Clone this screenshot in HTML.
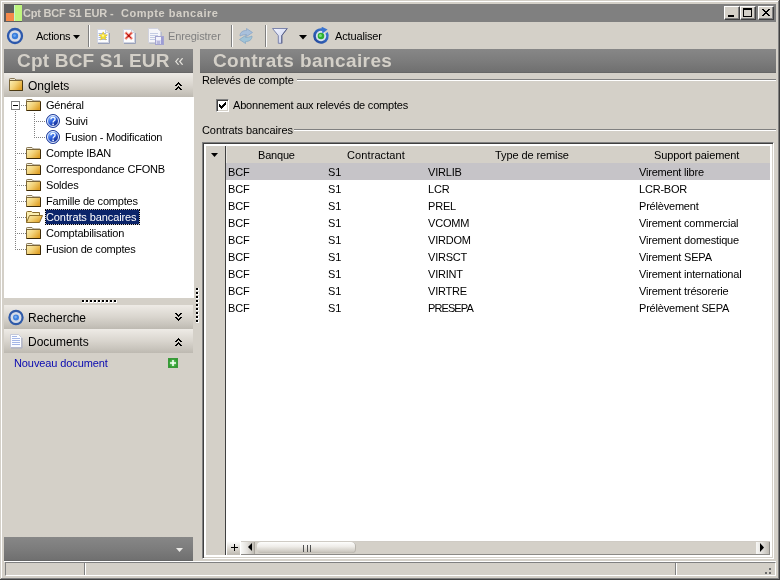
<!DOCTYPE html>
<html><head><meta charset="utf-8">
<style>
*{margin:0;padding:0;box-sizing:border-box}
html,body{width:780px;height:580px;overflow:hidden;background:#d4d0c8;position:relative;font-family:"Liberation Sans",sans-serif;font-size:11px;color:#000}
.a{position:absolute}
.t{position:absolute;white-space:nowrap;font-size:11px;line-height:13px;will-change:transform}
.b12{font-size:12px;line-height:14px}
.hdr{position:absolute;background:linear-gradient(#878787,#7c7c7c 50%,#707070 94%,#626262)}
.sec{position:absolute;background:linear-gradient(#eeebe6,#d9d5ce 50%,#c8c4bc 82%,#bdb9b1)}
.dot{position:absolute;border-top:1px dotted #808080}
.vdot{position:absolute;border-left:1px dotted #808080}
.tb{position:absolute;width:16px;height:14px;background:#d4d0c8;border-top:1px solid #fff;border-left:1px solid #fff;border-right:1px solid #404040;border-bottom:1px solid #404040;box-shadow:inset -1px -1px 0 #808080}
</style></head><body>
<!-- window frame -->
<div class="a" style="left:1px;top:1px;width:777px;height:1px;background:#fff"></div>
<div class="a" style="left:1px;top:1px;width:1px;height:577px;background:#fff"></div>
<div class="a" style="left:778px;top:1px;width:1px;height:578px;background:#808080"></div>
<div class="a" style="left:779px;top:0;width:1px;height:580px;background:#404040"></div>
<div class="a" style="left:1px;top:578px;width:778px;height:1px;background:#808080"></div>
<div class="a" style="left:0;top:579px;width:780px;height:1px;background:#404040"></div>

<!-- title bar -->
<div class="a" style="left:4px;top:4px;width:772px;height:18px;background:#808080"></div>
<div class="a" style="left:4px;top:4px;width:18px;height:18px;background:#5e5e5e"></div>
<div class="a" style="left:6px;top:13px;width:8px;height:8px;background:#f5894a"></div>
<div class="a" style="left:14px;top:5px;width:8px;height:16px;background:#bff57e;border-left:1px solid #c8f8d0"></div>
<div class="t" style="left:23px;top:7px;font-weight:bold;color:#d4d0c8;letter-spacing:-0.2px">Cpt BCF S1 EUR</div><div class="t" style="left:110px;top:7px;font-weight:bold;color:#d4d0c8">-</div><div class="t" style="left:121px;top:7px;font-weight:bold;color:#d4d0c8;letter-spacing:0.55px">Compte bancaire</div>
<div class="tb" style="left:724px;top:6px"><div class="a" style="left:3px;top:8px;width:6px;height:2px;background:#000"></div></div>
<div class="tb" style="left:740px;top:6px"><div class="a" style="left:2px;top:1px;width:9px;height:9px;border:1px solid #000;border-top-width:2px"></div></div>
<div class="tb" style="left:758px;top:6px"><svg class="a" style="left:3px;top:2px" width="8" height="7" viewBox="0 0 8 7" shape-rendering="crispEdges" fill="#000"><rect x="0" y="0" width="1" height="1"/><rect x="1" y="0" width="1" height="1"/><rect x="6" y="0" width="1" height="1"/><rect x="7" y="0" width="1" height="1"/><rect x="1" y="1" width="1" height="1"/><rect x="2" y="1" width="1" height="1"/><rect x="5" y="1" width="1" height="1"/><rect x="6" y="1" width="1" height="1"/><rect x="2" y="2" width="1" height="1"/><rect x="3" y="2" width="1" height="1"/><rect x="4" y="2" width="1" height="1"/><rect x="5" y="2" width="1" height="1"/><rect x="3" y="3" width="1" height="1"/><rect x="4" y="3" width="1" height="1"/><rect x="2" y="4" width="1" height="1"/><rect x="3" y="4" width="1" height="1"/><rect x="4" y="4" width="1" height="1"/><rect x="5" y="4" width="1" height="1"/><rect x="1" y="5" width="1" height="1"/><rect x="2" y="5" width="1" height="1"/><rect x="5" y="5" width="1" height="1"/><rect x="6" y="5" width="1" height="1"/><rect x="0" y="6" width="1" height="1"/><rect x="1" y="6" width="1" height="1"/><rect x="6" y="6" width="1" height="1"/><rect x="7" y="6" width="1" height="1"/></svg></div>

<!-- TOOLBAR -->
<svg class="a" style="left:6px;top:27px" width="18" height="18" viewBox="0 0 18 18"><circle cx="9" cy="9" r="7" fill="#d8dce6" stroke="#2c58ac" stroke-width="2.3"/><circle cx="9" cy="9" r="3.2" fill="#3a7ddb"/><circle cx="8.6" cy="8.6" r="1.4" fill="#6aa6f0"/></svg>
<div class="t" style="left:36px;top:30px;letter-spacing:-0.25px">Actions</div>
<svg class="a" style="left:73px;top:35px" width="7" height="4" viewBox="0 0 7 4"><path d="M0 0H7L3.5 4Z" fill="#000"/></svg>
<div class="a" style="left:88px;top:25px;width:1px;height:22px;background:#808080"></div>
<div class="a" style="left:89px;top:25px;width:1px;height:22px;background:#fff"></div>
<svg class="a" style="left:96px;top:28px" width="15" height="17" viewBox="0 0 15 17"><path d="M1.5 1.5H9.5L12.5 4.5V14.5H1.5Z" fill="#fcfdff" stroke="#d0d4e2"/><path d="M9.5 1.5V4.5H12.5" fill="#eef0f6" stroke="#c8ccd8"/><path d="M13.5 5V15.5H2" fill="none" stroke="#9aa2ba"/><path d="M2.5 5.5H10M2.5 7.5H11M2.5 9.5H11M2.5 11.5H11" stroke="#a8b8e0"/><path d="M7.20 3.90L8.38 6.68L11.38 6.94L9.10 8.92L9.79 11.86L7.20 10.30L4.61 11.86L5.30 8.92L3.02 6.94L6.02 6.68Z" fill="#f2e22a" stroke="#e0c030" stroke-width="0.7"/><circle cx="7" cy="7.6" r="1.2" fill="#fff6a0"/></svg>
<svg class="a" style="left:122px;top:28px" width="15" height="17" viewBox="0 0 15 17"><path d="M1.5 1.5H9.5L12.5 4.5V14.5H1.5Z" fill="#fcfdff" stroke="#d0d4e2"/><path d="M9.5 1.5V4.5H12.5" fill="#eef0f6" stroke="#c8ccd8"/><path d="M13.5 5V15.5H2" fill="none" stroke="#9aa2ba"/><path d="M3.2 4.2L10.2 11.2M10.2 4.2L3.2 11.2" stroke="#f8c8c0" stroke-width="3"/><path d="M3.5 4.5L9.9 10.9M9.9 4.5L3.5 10.9" stroke="#f07a6a" stroke-width="2"/><path d="M4.2 5.2L9.2 10.2M9.2 5.2L4.2 10.2" stroke="#b81010" stroke-width="0.9"/><circle cx="6.7" cy="7.7" r="1" fill="#a00"/></svg>
<svg class="a" style="left:147px;top:27px" width="18" height="19" viewBox="0 0 18 19"><path d="M1.5 1.5H10.5L13.5 4.5V15.5H1.5Z" fill="#f6f6fa" stroke="#d0d2de"/><path d="M3 6.5H11M3 8.5H11M3 10.5H11M3 12.5H9" stroke="#c4cce4"/><path d="M14.5 5V16.5H2.5" fill="none" stroke="#b8bccc"/><rect x="8.5" y="9.5" width="8" height="8" fill="#d8d8ee" stroke="#a4a4d0"/><rect x="9" y="10" width="5" height="3" fill="#f4f4fc"/><rect x="14" y="10" width="2" height="7" fill="#9c9cd4"/><rect x="10" y="14" width="3" height="3" fill="#b8b8dc"/></svg>
<div class="t" style="left:168px;top:30px;color:#808080;letter-spacing:-0.1px">Enregistrer</div>
<div class="a" style="left:231px;top:25px;width:1px;height:22px;background:#808080"></div>
<div class="a" style="left:232px;top:25px;width:1px;height:22px;background:#fff"></div>
<svg class="a" style="left:237px;top:27px" width="18" height="18" viewBox="0 0 18 18"><path d="M3 9C3 5 6 3.5 9.5 3.5V1.5L15.5 5.5L9.5 9.5V7.5C7 7.5 5.5 8 3 9Z" fill="#a8c0dc" stroke="#8aa6c8" stroke-width="0.8"/><path d="M15 9C15 13 12 14.5 8.5 14.5V16.5L2.5 12.5L8.5 8.5V10.5C11 10.5 12.5 10 15 9Z" fill="#a0c4d8" stroke="#86a8c4" stroke-width="0.8"/></svg>
<div class="a" style="left:265px;top:25px;width:1px;height:22px;background:#808080"></div>
<div class="a" style="left:266px;top:25px;width:1px;height:22px;background:#fff"></div>
<svg class="a" style="left:271px;top:26px" width="18" height="19" viewBox="0 0 18 19"><defs><linearGradient id="fng" x1="0" y1="0" x2="1" y2="1"><stop offset="0" stop-color="#f4f6ff"/><stop offset="1" stop-color="#c4cced"/></linearGradient></defs><path d="M1.5 2.5H16.2L10.8 9.6V17.3H7.3V9.6Z" fill="url(#fng)" stroke="#7c84ac" stroke-linejoin="round"/><path d="M16.2 2.5L10.8 9.6V17.3" fill="none" stroke="#5a6288"/></svg>
<svg class="a" style="left:299px;top:35px" width="8" height="5" viewBox="0 0 8 5"><path d="M0 0H8L4 4.5Z" fill="#000"/></svg>
<svg class="a" style="left:312px;top:27px" width="18" height="18" viewBox="0 0 18 18"><defs><linearGradient id="ag" x1="0" y1="1" x2="1" y2="0"><stop offset="0" stop-color="#24489c"/><stop offset="1" stop-color="#3c7cd8"/></linearGradient></defs><circle cx="9" cy="9" r="5" fill="#d6e4f4"/><path d="M14.63 5.75A6.5 6.5 0 1 1 10.2 2.6" fill="none" stroke="url(#ag)" stroke-width="2.6"/><path d="M9.6 -0.3L15.6 2.6L10.4 6.4Z" fill="#3a74d0"/><circle cx="9" cy="9" r="3.3" fill="#2db030"/><circle cx="8.4" cy="8.4" r="1.5" fill="#7ae07a"/></svg>
<div class="t" style="left:335px;top:30px;letter-spacing:-0.15px">Actualiser</div>


<!-- LEFT PANEL -->
<svg width="0" height="0" style="position:absolute"><defs>
<linearGradient id="fg" x1="0" y1="0" x2="1" y2="0.6"><stop offset="0" stop-color="#fbf0b8"/><stop offset="0.5" stop-color="#f3d37a"/><stop offset="1" stop-color="#e0a22a"/></linearGradient>
<linearGradient id="qg" x1="0.2" y1="0.1" x2="0.8" y2="0.9"><stop offset="0" stop-color="#80b0ff"/><stop offset="0.45" stop-color="#3064e0"/><stop offset="1" stop-color="#14288c"/></linearGradient>
</defs></svg>
<div class="hdr" style="left:4px;top:49px;width:189px;height:24px"></div>
<div class="t" style="left:17px;top:51px;font-size:19px;line-height:20px;font-weight:bold;color:#d4d0c8;letter-spacing:0.2px">Cpt BCF S1 EUR</div>
<svg class="a" style="left:175px;top:58px" width="8" height="7" viewBox="0 0 8 7" fill="none" stroke="#e4e2dc" stroke-width="1.2"><path d="M3.6 0.2L0.7 3.5L3.6 6.8M7.6 0.2L4.7 3.5L7.6 6.8"/></svg>
<div class="sec" style="left:4px;top:73px;width:189px;height:24px"></div>
<svg class="a" style="left:9px;top:78px" width="14" height="13" viewBox="0 0 14 13"><path d="M0.5 12V1.2Q0.5 0.5 1.2 0.5H5.5L7 2H13V12" fill="#ece6d0" stroke="#8a7a58"/><rect x="0.5" y="2.5" width="13" height="10" fill="url(#fg)" stroke="#7c6638"/><path d="M1 12.5H13.5V3" fill="none" stroke="#4a3810"/></svg>
<div class="t b12" style="left:28px;top:79px">Onglets</div>
<svg class="a" style="left:175px;top:82px" width="7" height="8" viewBox="0 0 7 8" fill="#000" shape-rendering="crispEdges"><rect x="3" y="0" width="1" height="1"/><rect x="2" y="1" width="3" height="1"/><rect x="1" y="2" width="2" height="1"/><rect x="4" y="2" width="2" height="1"/><rect x="0" y="3" width="2" height="1"/><rect x="5" y="3" width="2" height="1"/><rect x="3" y="4" width="1" height="1"/><rect x="2" y="5" width="3" height="1"/><rect x="1" y="6" width="2" height="1"/><rect x="4" y="6" width="2" height="1"/><rect x="0" y="7" width="2" height="1"/><rect x="5" y="7" width="2" height="1"/></svg>
<div class="a" style="left:4px;top:97px;width:190px;height:201px;background:#fff"></div>
<!-- tree -->
<!-- tree lines -->
<div class="a" style="left:15px;top:111px;width:1px;height:139px;background:repeating-linear-gradient(180deg,#808080 0 1px,transparent 1px 2px)"></div>
<div class="a" style="left:21px;top:105px;width:5px;height:1px;background:repeating-linear-gradient(90deg,#808080 0 1px,transparent 1px 2px)"></div>
<div class="a" style="left:34px;top:113px;width:1px;height:25px;background:repeating-linear-gradient(180deg,#808080 0 1px,transparent 1px 2px)"></div>
<div class="a" style="left:36px;top:121px;width:9px;height:1px;background:repeating-linear-gradient(90deg,#808080 0 1px,transparent 1px 2px)"></div><div class="a" style="left:36px;top:137px;width:9px;height:1px;background:repeating-linear-gradient(90deg,#808080 0 1px,transparent 1px 2px)"></div>
<div class="a" style="left:17px;top:153px;width:9px;height:1px;background:repeating-linear-gradient(90deg,#808080 0 1px,transparent 1px 2px)"></div>
<div class="a" style="left:17px;top:169px;width:9px;height:1px;background:repeating-linear-gradient(90deg,#808080 0 1px,transparent 1px 2px)"></div>
<div class="a" style="left:17px;top:185px;width:9px;height:1px;background:repeating-linear-gradient(90deg,#808080 0 1px,transparent 1px 2px)"></div>
<div class="a" style="left:17px;top:201px;width:9px;height:1px;background:repeating-linear-gradient(90deg,#808080 0 1px,transparent 1px 2px)"></div>
<div class="a" style="left:17px;top:217px;width:9px;height:1px;background:repeating-linear-gradient(90deg,#808080 0 1px,transparent 1px 2px)"></div>
<div class="a" style="left:17px;top:233px;width:9px;height:1px;background:repeating-linear-gradient(90deg,#808080 0 1px,transparent 1px 2px)"></div>
<div class="a" style="left:17px;top:249px;width:9px;height:1px;background:repeating-linear-gradient(90deg,#808080 0 1px,transparent 1px 2px)"></div>

<div class="a" style="left:11px;top:101px;width:9px;height:9px;border:1px solid #808080;background:#fff"><div class="a" style="left:1px;top:3px;width:5px;height:1px;background:#000"></div></div>
<svg class="a" style="left:26px;top:99px" width="15" height="12" viewBox="0 0 15 12"><path d="M0.5 11V1.2Q0.5 0.5 1.2 0.5H6L7.5 2H14V11" fill="#f4f0de" stroke="#8a7a58"/><rect x="0.5" y="2.5" width="14" height="9" fill="url(#fg)" stroke="#7c6638"/><path d="M1 11.5H14.5V3" fill="none" stroke="#3c2a08"/></svg><div class="t" style="left:46px;top:99px;letter-spacing:-0.2px">Général</div>
<svg class="a" style="left:46px;top:114px" width="14" height="14" viewBox="0 0 14 14"><circle cx="7" cy="7" r="6.5" fill="#2850b8" stroke="#24409a"/><circle cx="7" cy="7" r="5.5" fill="url(#qg)" stroke="#e8f0ff" stroke-width="1"/><path d="M4.9 5.3Q4.9 3.3 7 3.3Q9.1 3.3 9.1 5.1Q9.1 6.3 7.9 6.9Q7.1 7.3 7.1 8.6" fill="none" stroke="#f0f8ff" stroke-width="1.4"/><rect x="6.3" y="9.6" width="1.6" height="1.6" fill="#f0f8ff"/></svg><div class="t" style="left:65px;top:115px;letter-spacing:-0.2px">Suivi</div>
<svg class="a" style="left:46px;top:130px" width="14" height="14" viewBox="0 0 14 14"><circle cx="7" cy="7" r="6.5" fill="#2850b8" stroke="#24409a"/><circle cx="7" cy="7" r="5.5" fill="url(#qg)" stroke="#e8f0ff" stroke-width="1"/><path d="M4.9 5.3Q4.9 3.3 7 3.3Q9.1 3.3 9.1 5.1Q9.1 6.3 7.9 6.9Q7.1 7.3 7.1 8.6" fill="none" stroke="#f0f8ff" stroke-width="1.4"/><rect x="6.3" y="9.6" width="1.6" height="1.6" fill="#f0f8ff"/></svg><div class="t" style="left:65px;top:131px;letter-spacing:-0.2px">Fusion - Modification</div>
<svg class="a" style="left:26px;top:147px" width="15" height="12" viewBox="0 0 15 12"><path d="M0.5 11V1.2Q0.5 0.5 1.2 0.5H6L7.5 2H14V11" fill="#f4f0de" stroke="#8a7a58"/><rect x="0.5" y="2.5" width="14" height="9" fill="url(#fg)" stroke="#7c6638"/><path d="M1 11.5H14.5V3" fill="none" stroke="#3c2a08"/></svg><div class="t" style="left:46px;top:147px;letter-spacing:-0.2px">Compte IBAN</div>
<svg class="a" style="left:26px;top:163px" width="15" height="12" viewBox="0 0 15 12"><path d="M0.5 11V1.2Q0.5 0.5 1.2 0.5H6L7.5 2H14V11" fill="#f4f0de" stroke="#8a7a58"/><rect x="0.5" y="2.5" width="14" height="9" fill="url(#fg)" stroke="#7c6638"/><path d="M1 11.5H14.5V3" fill="none" stroke="#3c2a08"/></svg><div class="t" style="left:46px;top:163px;letter-spacing:-0.2px">Correspondance CFONB</div>
<svg class="a" style="left:26px;top:179px" width="15" height="12" viewBox="0 0 15 12"><path d="M0.5 11V1.2Q0.5 0.5 1.2 0.5H6L7.5 2H14V11" fill="#f4f0de" stroke="#8a7a58"/><rect x="0.5" y="2.5" width="14" height="9" fill="url(#fg)" stroke="#7c6638"/><path d="M1 11.5H14.5V3" fill="none" stroke="#3c2a08"/></svg><div class="t" style="left:46px;top:179px;letter-spacing:-0.2px">Soldes</div>
<svg class="a" style="left:26px;top:195px" width="15" height="12" viewBox="0 0 15 12"><path d="M0.5 11V1.2Q0.5 0.5 1.2 0.5H6L7.5 2H14V11" fill="#f4f0de" stroke="#8a7a58"/><rect x="0.5" y="2.5" width="14" height="9" fill="url(#fg)" stroke="#7c6638"/><path d="M1 11.5H14.5V3" fill="none" stroke="#3c2a08"/></svg><div class="t" style="left:46px;top:195px;letter-spacing:-0.2px">Famille de comptes</div>
<svg class="a" style="left:26px;top:211px" width="17" height="13" viewBox="0 0 17 13"><path d="M0.5 11.5V1.5Q0.5 0.5 1.5 0.5H5.5L6.5 1.5H13.5V4.5" fill="#fbeeb0" stroke="#8a6c2c"/><path d="M0.5 11.5L3.5 4.5H16.5L13.5 11.5Z" fill="url(#fg)" stroke="#8a6c2c"/></svg>
<div class="a" style="left:45px;top:209px;width:95px;height:16px;background:#0a246a;border:1px solid #c8c8d8;outline:1px dotted #000;outline-offset:-1px"></div>
<div class="t" style="left:46px;top:211px;color:#fff;letter-spacing:-0.1px">Contrats bancaires</div>
<svg class="a" style="left:26px;top:227px" width="15" height="12" viewBox="0 0 15 12"><path d="M0.5 11V1.2Q0.5 0.5 1.2 0.5H6L7.5 2H14V11" fill="#f4f0de" stroke="#8a7a58"/><rect x="0.5" y="2.5" width="14" height="9" fill="url(#fg)" stroke="#7c6638"/><path d="M1 11.5H14.5V3" fill="none" stroke="#3c2a08"/></svg><div class="t" style="left:46px;top:227px;letter-spacing:-0.2px">Comptabilisation</div>
<svg class="a" style="left:26px;top:243px" width="15" height="12" viewBox="0 0 15 12"><path d="M0.5 11V1.2Q0.5 0.5 1.2 0.5H6L7.5 2H14V11" fill="#f4f0de" stroke="#8a7a58"/><rect x="0.5" y="2.5" width="14" height="9" fill="url(#fg)" stroke="#7c6638"/><path d="M1 11.5H14.5V3" fill="none" stroke="#3c2a08"/></svg><div class="t" style="left:46px;top:243px;letter-spacing:-0.2px">Fusion de comptes</div>
<!-- splitter -->
<div class="a" style="left:82px;top:300px;width:3px;height:3px;background:#fff"></div><div class="a" style="left:82px;top:300px;width:2px;height:2px;background:#000"></div><div class="a" style="left:86px;top:300px;width:3px;height:3px;background:#fff"></div><div class="a" style="left:86px;top:300px;width:2px;height:2px;background:#000"></div><div class="a" style="left:90px;top:300px;width:3px;height:3px;background:#fff"></div><div class="a" style="left:90px;top:300px;width:2px;height:2px;background:#000"></div><div class="a" style="left:94px;top:300px;width:3px;height:3px;background:#fff"></div><div class="a" style="left:94px;top:300px;width:2px;height:2px;background:#000"></div><div class="a" style="left:98px;top:300px;width:3px;height:3px;background:#fff"></div><div class="a" style="left:98px;top:300px;width:2px;height:2px;background:#000"></div><div class="a" style="left:102px;top:300px;width:3px;height:3px;background:#fff"></div><div class="a" style="left:102px;top:300px;width:2px;height:2px;background:#000"></div><div class="a" style="left:106px;top:300px;width:3px;height:3px;background:#fff"></div><div class="a" style="left:106px;top:300px;width:2px;height:2px;background:#000"></div><div class="a" style="left:110px;top:300px;width:3px;height:3px;background:#fff"></div><div class="a" style="left:110px;top:300px;width:2px;height:2px;background:#000"></div><div class="a" style="left:114px;top:300px;width:3px;height:3px;background:#fff"></div><div class="a" style="left:114px;top:300px;width:2px;height:2px;background:#000"></div>
<div class="a" style="left:196px;top:288px;width:3px;height:3px;background:#fff"></div><div class="a" style="left:196px;top:288px;width:2px;height:2px;background:#000"></div><div class="a" style="left:196px;top:292px;width:3px;height:3px;background:#fff"></div><div class="a" style="left:196px;top:292px;width:2px;height:2px;background:#000"></div><div class="a" style="left:196px;top:296px;width:3px;height:3px;background:#fff"></div><div class="a" style="left:196px;top:296px;width:2px;height:2px;background:#000"></div><div class="a" style="left:196px;top:300px;width:3px;height:3px;background:#fff"></div><div class="a" style="left:196px;top:300px;width:2px;height:2px;background:#000"></div><div class="a" style="left:196px;top:304px;width:3px;height:3px;background:#fff"></div><div class="a" style="left:196px;top:304px;width:2px;height:2px;background:#000"></div><div class="a" style="left:196px;top:308px;width:3px;height:3px;background:#fff"></div><div class="a" style="left:196px;top:308px;width:2px;height:2px;background:#000"></div><div class="a" style="left:196px;top:312px;width:3px;height:3px;background:#fff"></div><div class="a" style="left:196px;top:312px;width:2px;height:2px;background:#000"></div><div class="a" style="left:196px;top:316px;width:3px;height:3px;background:#fff"></div><div class="a" style="left:196px;top:316px;width:2px;height:2px;background:#000"></div><div class="a" style="left:196px;top:320px;width:3px;height:3px;background:#fff"></div><div class="a" style="left:196px;top:320px;width:2px;height:2px;background:#000"></div>
<div class="sec" style="left:4px;top:305px;width:189px;height:24px"></div>
<svg class="a" style="left:7px;top:309px" width="18" height="17" viewBox="0 0 18 17"><circle cx="9" cy="8.5" r="6.6" fill="#d6dce6" stroke="#2f5aa8" stroke-width="2.2"/><circle cx="9" cy="8.5" r="3" fill="#3f82de"/><circle cx="8.6" cy="8.1" r="1.3" fill="#7ab0f2"/></svg>
<div class="t b12" style="left:28px;top:311px">Recherche</div>
<svg class="a" style="left:175px;top:313px" width="7" height="8" viewBox="0 0 7 8" fill="#000" shape-rendering="crispEdges"><rect x="3" y="3" width="1" height="1"/><rect x="2" y="2" width="3" height="1"/><rect x="1" y="1" width="2" height="1"/><rect x="4" y="1" width="2" height="1"/><rect x="0" y="0" width="2" height="1"/><rect x="5" y="0" width="2" height="1"/><rect x="3" y="7" width="1" height="1"/><rect x="2" y="6" width="3" height="1"/><rect x="1" y="5" width="2" height="1"/><rect x="4" y="5" width="2" height="1"/><rect x="0" y="4" width="2" height="1"/><rect x="5" y="4" width="2" height="1"/></svg>
<div class="sec" style="left:4px;top:329px;width:189px;height:24px"></div>
<svg class="a" style="left:10px;top:334px" width="13" height="15" viewBox="0 0 13 15"><path d="M0.5 0.5H8.5L11.5 3.5V13.5H0.5Z" fill="#fbfcff" stroke="#c4c8d8"/><path d="M12 4V14H1" fill="none" stroke="#a8acc0"/><path d="M2 2.5H7M2 4.5H10M2 6.5H10M2 8.5H10M2 10.5H10" stroke="#a4b6e6"/></svg>
<div class="t b12" style="left:28px;top:335px">Documents</div>
<svg class="a" style="left:175px;top:338px" width="7" height="8" viewBox="0 0 7 8" fill="#000" shape-rendering="crispEdges"><rect x="3" y="0" width="1" height="1"/><rect x="2" y="1" width="3" height="1"/><rect x="1" y="2" width="2" height="1"/><rect x="4" y="2" width="2" height="1"/><rect x="0" y="3" width="2" height="1"/><rect x="5" y="3" width="2" height="1"/><rect x="3" y="4" width="1" height="1"/><rect x="2" y="5" width="3" height="1"/><rect x="1" y="6" width="2" height="1"/><rect x="4" y="6" width="2" height="1"/><rect x="0" y="7" width="2" height="1"/><rect x="5" y="7" width="2" height="1"/></svg>
<div class="t" style="left:14px;top:357px;color:#0808b0;letter-spacing:-0.1px">Nouveau document</div>
<svg class="a" style="left:168px;top:358px" width="10" height="10" viewBox="0 0 10 10"><defs><radialGradient id="gpg"><stop offset="0" stop-color="#7cd47c"/><stop offset="1" stop-color="#2e9a2e"/></radialGradient></defs><rect x="0.5" y="0.5" width="9" height="9" fill="url(#gpg)" stroke="#3a983a"/><path d="M5 2V8M2 5H8" stroke="#f4fff4" stroke-width="1.6"/></svg>
<div class="hdr" style="left:4px;top:537px;width:189px;height:24px"></div>
<svg class="a" style="left:176px;top:548px" width="7" height="4" viewBox="0 0 7 4"><path d="M0 0H7L3.5 4Z" fill="#ecebe8"/></svg>


<!-- RIGHT PANEL -->
<div class="hdr" style="left:200px;top:49px;width:576px;height:24px"></div>
<div class="t" style="left:213px;top:51px;font-size:19px;line-height:20px;font-weight:bold;color:#d4d0c8;letter-spacing:0.4px">Contrats bancaires</div>
<div class="t" style="left:202px;top:74px;letter-spacing:-0.15px">Relevés de compte</div>
<div class="a" style="left:297px;top:79px;width:479px;height:1px;background:#808080"></div>
<div class="a" style="left:297px;top:80px;width:479px;height:1px;background:#fff"></div>
<div class="a" style="left:216px;top:99px;width:13px;height:13px;border-top:1px solid #808080;border-left:1px solid #808080;border-right:1px solid #fff;border-bottom:1px solid #fff;background:#fff;box-shadow:inset 1px 1px 0 #404040,inset -1px -1px 0 #d4d0c8"></div>
<svg class="a" style="left:219px;top:102px" width="7" height="7" viewBox="0 0 7 7"><path d="M0 2H1V3H2V4H3V3H4V2H5V1H6V0H7V3H6V4H5V5H4V6H3V7H2V6H1V5H0Z" fill="#000"/></svg>
<div class="t" style="left:233px;top:99px;letter-spacing:-0.2px">Abonnement aux relevés de comptes</div>
<div class="t" style="left:202px;top:124px;letter-spacing:-0.08px">Contrats bancaires</div>
<div class="a" style="left:294px;top:129px;width:482px;height:1px;background:#808080"></div>
<div class="a" style="left:294px;top:130px;width:482px;height:1px;background:#fff"></div>
<!-- grid -->
<div class="a" style="left:202px;top:142px;width:572px;height:417px;border-top:1px solid #808080;border-left:1px solid #808080;border-right:1px solid #fff;border-bottom:1px solid #fff;background:#fff;box-shadow:inset 1px 1px 0 #404040,inset -1px -1px 0 #d4d0c8"></div>
<div class="a" style="left:205px;top:145px;width:21px;height:410px;background:#d4d0c8;border-left:1px solid #fff;border-top:1px solid #fff"></div>
<div class="a" style="left:225px;top:146px;width:1px;height:409px;background:#404040"></div>
<svg class="a" style="left:211px;top:153px" width="8" height="4" viewBox="0 0 8 4"><path d="M0 0H7L3.5 4Z" fill="#000"/></svg>
<div class="a" style="left:226px;top:145px;width:544px;height:18px;background:#d4d0c8;border-left:1px solid #e8e6e2;border-top:1px solid #fff"></div>
<div class="t" style="left:258px;top:149px;letter-spacing:-0.2px">Banque</div>
<div class="t" style="left:347px;top:149px;letter-spacing:0.1px">Contractant</div>
<div class="t" style="left:495px;top:149px;letter-spacing:-0.1px">Type de remise</div>
<div class="t" style="left:654px;top:149px;letter-spacing:-0.1px">Support paiement</div>
<div class="a" style="left:226px;top:163px;width:544px;height:17px;background:#c6c4c8"></div>
<div class="t" style="left:228px;top:166px;letter-spacing:-0.2px">BCF</div><div class="t" style="left:328px;top:166px;letter-spacing:-0.2px">S1</div><div class="t" style="left:428px;top:166px;letter-spacing:-0.2px">VIRLIB</div><div class="t" style="left:639px;top:166px;letter-spacing:-0.2px">Virement libre</div>
<div class="t" style="left:228px;top:183px;letter-spacing:-0.2px">BCF</div><div class="t" style="left:328px;top:183px;letter-spacing:-0.2px">S1</div><div class="t" style="left:428px;top:183px;letter-spacing:-0.2px">LCR</div><div class="t" style="left:639px;top:183px;letter-spacing:-0.2px">LCR-BOR</div>
<div class="t" style="left:228px;top:200px;letter-spacing:-0.2px">BCF</div><div class="t" style="left:328px;top:200px;letter-spacing:-0.2px">S1</div><div class="t" style="left:428px;top:200px;letter-spacing:-0.2px">PREL</div><div class="t" style="left:639px;top:200px;letter-spacing:-0.2px">Prélèvement</div>
<div class="t" style="left:228px;top:217px;letter-spacing:-0.2px">BCF</div><div class="t" style="left:328px;top:217px;letter-spacing:-0.2px">S1</div><div class="t" style="left:428px;top:217px;letter-spacing:-0.2px">VCOMM</div><div class="t" style="left:639px;top:217px;letter-spacing:-0.2px">Virement commercial</div>
<div class="t" style="left:228px;top:234px;letter-spacing:-0.2px">BCF</div><div class="t" style="left:328px;top:234px;letter-spacing:-0.2px">S1</div><div class="t" style="left:428px;top:234px;letter-spacing:-0.2px">VIRDOM</div><div class="t" style="left:639px;top:234px;letter-spacing:-0.2px">Virement domestique</div>
<div class="t" style="left:228px;top:251px;letter-spacing:-0.2px">BCF</div><div class="t" style="left:328px;top:251px;letter-spacing:-0.2px">S1</div><div class="t" style="left:428px;top:251px;letter-spacing:-0.2px">VIRSCT</div><div class="t" style="left:639px;top:251px;letter-spacing:-0.2px">Virement SEPA</div>
<div class="t" style="left:228px;top:268px;letter-spacing:-0.2px">BCF</div><div class="t" style="left:328px;top:268px;letter-spacing:-0.2px">S1</div><div class="t" style="left:428px;top:268px;letter-spacing:-0.2px">VIRINT</div><div class="t" style="left:639px;top:268px;letter-spacing:-0.2px">Virement international</div>
<div class="t" style="left:228px;top:285px;letter-spacing:-0.2px">BCF</div><div class="t" style="left:328px;top:285px;letter-spacing:-0.2px">S1</div><div class="t" style="left:428px;top:285px;letter-spacing:-0.2px">VIRTRE</div><div class="t" style="left:639px;top:285px;letter-spacing:-0.2px">Virement trésorerie</div>
<div class="t" style="left:228px;top:302px;letter-spacing:-0.2px">BCF</div><div class="t" style="left:328px;top:302px;letter-spacing:-0.2px">S1</div><div class="t" style="left:428px;top:302px;letter-spacing:-0.9px">PRESEPA</div><div class="t" style="left:639px;top:302px;letter-spacing:-0.2px">Prélèvement SEPA</div>
<!-- grid bottom -->
<div class="a" style="left:227px;top:541px;width:13px;height:14px;background:linear-gradient(#ffffff,#f0efec 25%,#d4d0c8 65%,#bcb8b0)"></div>
<div class="a" style="left:231px;top:547px;width:7px;height:1px;background:#000"></div>
<div class="a" style="left:234px;top:544px;width:1px;height:7px;background:#000"></div>
<div class="a" style="left:241px;top:541px;width:529px;height:14px;background:#d4d0c8;border-top:1px solid #cfcbc4;border-bottom:1px solid #8c8a86"></div>
<div class="a" style="left:241px;top:542px;width:14px;height:12px;background:linear-gradient(90deg,#f8f8f6,#e4e2de 45%,#c0bcb4);border-right:1px solid #a8a49c"></div>
<svg class="a" style="left:248px;top:543px" width="4" height="8" viewBox="0 0 4 8"><path d="M4 0V8L0 4Z" fill="#000"/></svg>
<div class="a" style="left:257px;top:542px;width:99px;height:11px;border-radius:4px;background:linear-gradient(#fdfdfc,#efede9 40%,#cfcbc3 85%,#bdb9b1);box-shadow:inset -1px 0 0 #b8b4ac"></div>
<div class="a" style="left:303px;top:545px;width:1px;height:7px;background:#505050"></div>
<div class="a" style="left:307px;top:545px;width:1px;height:7px;background:#505050"></div>
<div class="a" style="left:310px;top:545px;width:1px;height:7px;background:#505050"></div>
<div class="a" style="left:756px;top:542px;width:14px;height:12px;background:linear-gradient(90deg,#f8f8f6,#e4e2de 45%,#c0bcb4);border-right:1px solid #8c8a86"></div>
<svg class="a" style="left:760px;top:543px" width="4" height="9" viewBox="0 0 4 9"><path d="M0 0V9L4 4.5Z" fill="#000"/></svg>
<!-- STATUS BAR -->
<div class="a" style="left:4px;top:561px;width:772px;height:1px;background:#fff"></div>
<div class="a" style="left:5px;top:562px;width:771px;height:14px;border-top:1px solid #808080;border-left:1px solid #808080;border-bottom:1px solid #fff;border-right:1px solid #fff"></div>
<div class="a" style="left:84px;top:563px;width:1px;height:12px;background:#808080"></div>
<div class="a" style="left:85px;top:563px;width:1px;height:12px;background:#fff"></div>
<div class="a" style="left:675px;top:563px;width:1px;height:12px;background:#808080"></div>
<div class="a" style="left:676px;top:563px;width:1px;height:12px;background:#fff"></div>
<svg class="a" style="left:763px;top:566px" width="10" height="9" viewBox="0 0 10 9" shape-rendering="crispEdges"><rect x="7" y="3" width="1" height="1" fill="#fff"/><rect x="3" y="7" width="1" height="1" fill="#fff"/><rect x="7" y="7" width="1" height="1" fill="#fff"/><rect x="6" y="2" width="2" height="2" fill="#6c6c6c"/><rect x="2" y="6" width="2" height="2" fill="#6c6c6c"/><rect x="6" y="6" width="2" height="2" fill="#6c6c6c"/></svg>

</body></html>
